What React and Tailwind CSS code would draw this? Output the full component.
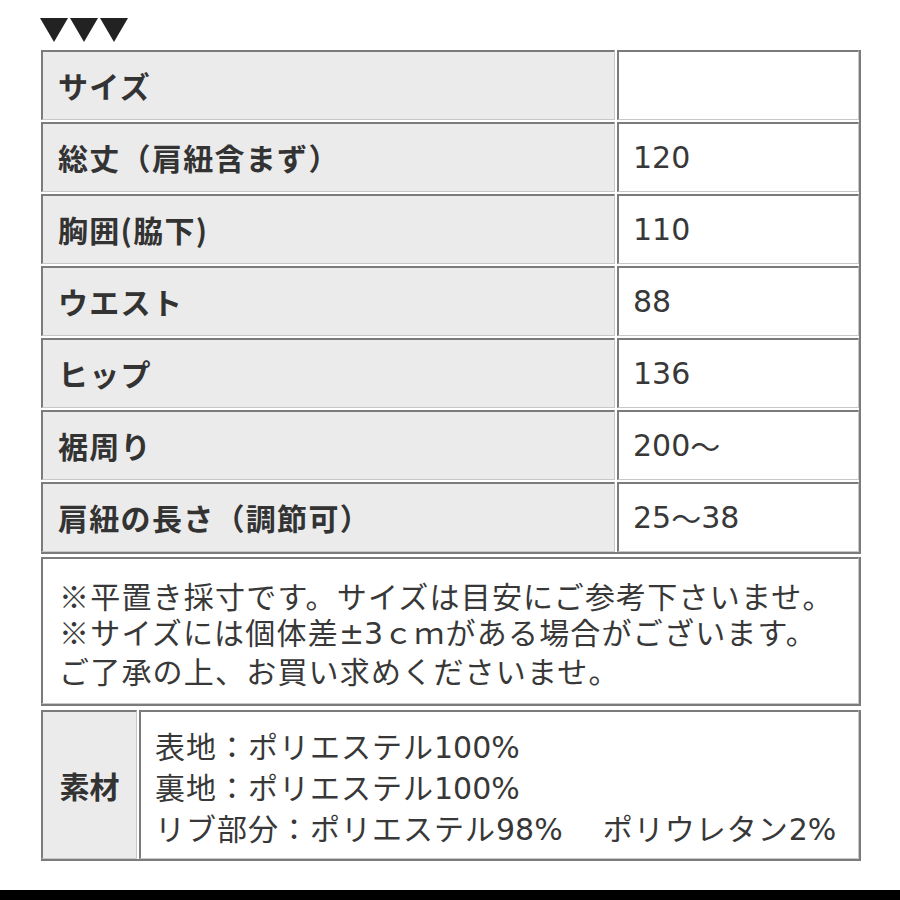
const FONT = { fontFamily: '"Noto Sans CJK JP", "Noto Sans", sans-serif' };
const LATIN = { fontFamily: '"DejaVu Sans", "Noto Sans CJK JP", sans-serif', letterSpacing: "0px" };

const ROWS = [
  ["サイズ", ""],
  ["総丈（肩紐含まず）", "120"],
  ["胸囲(脇下)", "110"],
  ["ウエスト", "88"],
  ["ヒップ", "136"],
  ["裾周り", "200～"],
  ["肩紐の長さ（調節可）", "25～38"],
];

const cell = "border-t-2 border-l-2 border-[#7b7b7b] border-b border-r border-b-[#c8c8c8] border-r-[#c8c8c8]";

// wrap digit runs so they get the wider latin face
function Txt({ children }) {
  return String(children)
    .split(/([0-9%±]+)/)
    .map((p, i) => (/^[0-9%±]+$/.test(p) ? <span key={i} style={LATIN}>{p}</span> : <span key={i}>{p}</span>));
}

export default function App() {
  return (
    <div className="relative w-[900px] h-[900px] bg-white text-[#383838] overflow-hidden" style={FONT}>
      <div className="pl-[40px] pt-[12px] h-[50px] flex gap-[2px]">
        {[0, 1, 2].map((i) => (
          <svg key={i} width="28" height="26" viewBox="0 0 28 26" className="mt-[4px]">
            <polygon points="0,2 28,2 14,26" fill="#222" />
          </svg>
        ))}
      </div>

      {/* size table */}
      <div className="ml-[41px] w-[820px] flex flex-col gap-[2px] border-r-2 border-b-2 border-[#7b7b7b]">
        {ROWS.map(([l, v]) => (
          <div key={l} className="flex gap-[2px] h-[70px]">
            <div className={`${cell} w-[574px] bg-[#ebebeb] flex items-center pl-[15px] text-[30px] tracking-[1.3px] font-bold text-[#333]`}>{l}</div>
            <div className={`${cell} flex-1 bg-white flex items-center pl-[14px] text-[30px]`}>
              {v && <Txt>{v}</Txt>}
            </div>
          </div>
        ))}
      </div>

      {/* note */}
      <div className="ml-[41px] mt-[3px] w-[820px] h-[149px] border-r-2 border-b-2 border-[#7b7b7b]">
        <div className={`${cell} h-full pl-[16px] pt-[18px] text-[30px] leading-[36px] tracking-[1.2px]`}>
          <div>※平置き採寸です。サイズは目安にご参考下さいませ。</div>
          <div>※サイズには個体差<Txt>±3</Txt>ｃｍがある場合がございます。</div>
          <div>ご了承の上、お買い求めくださいませ。</div>
        </div>
      </div>

      {/* material */}
      <div className="ml-[41px] mt-[4px] w-[820px] h-[151px] flex gap-[2px] border-r-2 border-b-2 border-[#7b7b7b]">
        <div className={`${cell} w-[96px] bg-[#ebebeb] flex items-center justify-center text-[30px] font-bold text-[#333]`}>素材</div>
        <div className={`${cell} flex-1 bg-white pl-[14px] pt-[14px] text-[30px] leading-[39px] tracking-[1px]`}>
          <div><Txt>表地：ポリエステル100%</Txt></div>
          <div><Txt>裏地：ポリエステル100%</Txt></div>
          <div><Txt>リブ部分：ポリエステル98%</Txt><span className="inline-block w-[40px]" /><Txt>ポリウレタン2%</Txt></div>
        </div>
      </div>

      <div className="absolute left-0 bottom-0 w-full h-[10px] bg-black" />
    </div>
  );
}
